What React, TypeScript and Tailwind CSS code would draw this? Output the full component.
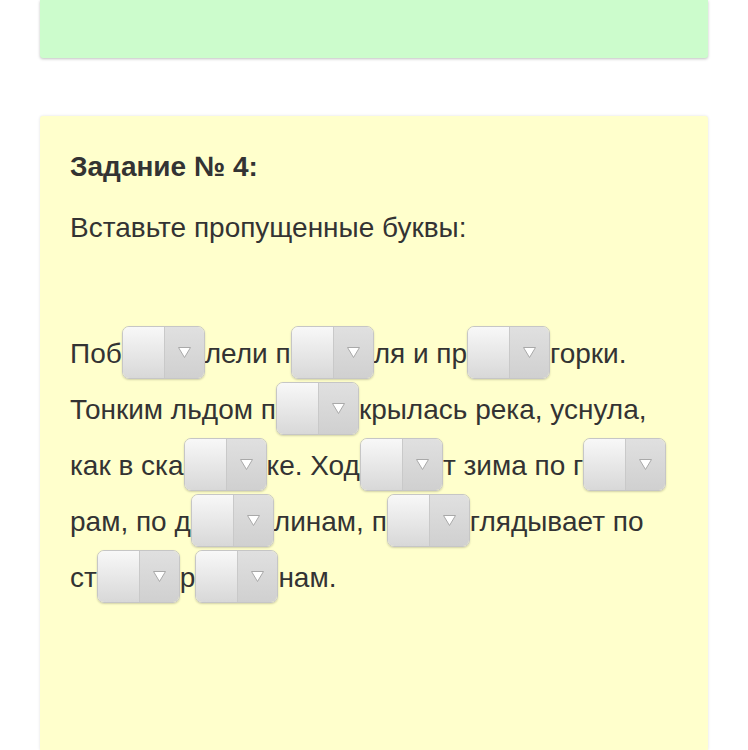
const FONT = "font-['Liberation_Sans','Helvetica_Neue',Arial,sans-serif]";

type Part = string | { gap: true };

const GAP: Part = { gap: true };

// текст задания, пропуски — выпадающие списки
const parts: Part[] = [
  "Поб", GAP, "лели п", GAP, "ля и пр", GAP, "горки. Тонким льдом п", GAP,
  "крылась река, уснула, как в ска", GAP, "ке. Ход", GAP, "т зима по г", GAP,
  "рам, по д", GAP, "линам, п", GAP, "глядывает по ст", GAP, "р", GAP, "нам.",
];

function LetterSelect() {
  return (
    <span className="relative -top-[3px] inline-flex w-[83px] h-[53px] align-middle rounded-[7px] border border-[#c6c6c6] overflow-hidden shadow-[0_1px_2px_rgba(0,0,0,0.18)] -my-2">
      <span className="w-[41px] h-full bg-gradient-to-b from-[#f8f8f8] to-[#d8d8d8]" />
      <span className="flex-1 h-full flex items-center justify-center border-l border-[#c9c9c9] bg-gradient-to-b from-[#e0e0e0] to-[#d0d0d0]">
        <svg width="15" height="13" viewBox="0 0 15 13">
          <polygon points="1.5,1.5 13.5,1.5 7.5,11.5" fill="#ffffff" stroke="#a9a9a9" strokeWidth="1" strokeLinejoin="round" />
        </svg>
      </span>
    </span>
  );
}

export default function App() {
  return (
    <div className={`min-h-screen bg-white px-[40px] ${FONT} text-[#333333]`}>
      {/* предыдущее задание, обрезано сверху */}
      <div className="h-[58px] bg-[#ccfccc] rounded-b-[3px] shadow-[0_1px_3px_rgba(0,0,0,0.25)]" />

      <div className="mt-[58px] min-h-[634px] bg-[#ffffcc] rounded-t-[3px] px-[30px] pt-[36px] pb-10 shadow-[0_0_3px_rgba(0,0,0,0.12)]">
        <h2 className="text-[28px] leading-[29px] font-bold">Задание № 4:</h2>
        <p className="mt-[32px] text-[28px] leading-[29px]">Вставьте пропущенные буквы:</p>

        <p className="mt-[84px] text-[28px] leading-[56px]">
          {parts.map((p, i) =>
            typeof p === "string" ? <span key={i}>{p}</span> : <LetterSelect key={i} />
          )}
        </p>
      </div>
    </div>
  );
}
